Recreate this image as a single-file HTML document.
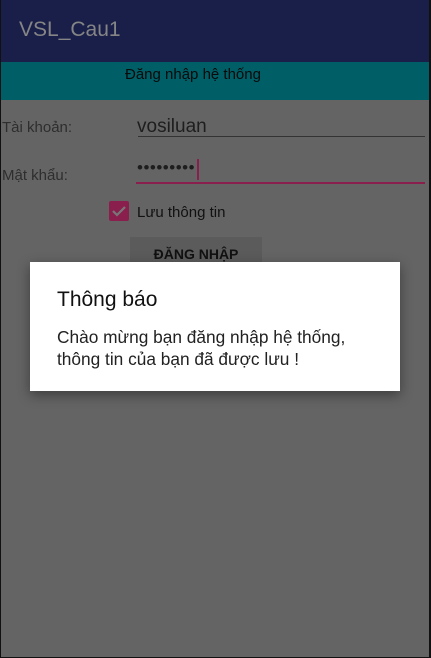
<!DOCTYPE html>
<html><head><meta charset="utf-8"><style>
*{margin:0;padding:0;box-sizing:border-box}
body{width:431px;height:658px;overflow:hidden;background:#111;font-family:"Liberation Sans",sans-serif;position:relative}
.scr{position:absolute;left:1px;top:0;width:428px;height:657px;background:#646464}
.bar{position:absolute;left:0;top:0;width:428px;height:62px;background:#1a1f4a}
.bar span{position:absolute;left:18px;top:18px;font-size:21px;color:#858585}
.teal{position:absolute;left:0;top:62px;width:428px;height:38px;background:#005e66;font-size:15px;color:#0a0a0a;line-height:26px}
.teal span{position:absolute;left:124px;top:0}
.t{position:absolute;font-size:15px;color:#2e2e2e}
.dlg{position:absolute;left:30px;top:262px;width:370px;height:129px;background:#fff;box-shadow:0 4px 12px rgba(0,0,0,.4)}
</style></head><body>
<div class="scr">
<div class="bar"><span>VSL_Cau1</span></div>
<div class="teal"><span>Đăng nhập hệ thống</span></div>
<div class="t" style="left:1px;top:119px">Tài khoản:</div>
<div class="t" style="left:136px;top:116px;font-size:19px;color:#1e1e1e">vosiluan</div>
<div style="position:absolute;left:137px;top:136px;width:287px;height:1px;background:#333"></div>
<div class="t" style="left:1px;top:167px">Mật khẩu:</div>
<div class="t" style="left:136px;top:158px;font-size:17px;color:#1e1e1e;letter-spacing:0.5px">•••••••••</div>
<div style="position:absolute;left:196px;top:159px;width:2px;height:21px;background:#8a1f4e"></div>
<div style="position:absolute;left:135px;top:182px;width:289px;height:2px;background:#8a1f4e"></div>
<div style="position:absolute;left:108px;top:201px;width:20px;height:20px;background:#8a1f4e;border-radius:2px"><svg width="20" height="20"><path d="M4 10l4 4 8-8" stroke="#777" stroke-width="2.2" fill="none"/></svg></div>
<div class="t" style="left:136px;top:204px;color:#111">Lưu thông tin</div>
<div style="position:absolute;left:129px;top:237px;width:132px;height:30px;background:#5b5b5b;text-align:center;font-size:14px;font-weight:bold;color:#111;line-height:34px">ĐĂNG NHẬP</div>
</div>
<div class="dlg">
<div style="position:absolute;left:27px;top:26px;font-size:21px;color:#111">Thông báo</div>
<div style="position:absolute;left:27px;top:64px;font-size:17.3px;color:#222;line-height:22px">Chào mừng bạn đăng nhập hệ thống,<br>thông tin của bạn đã được lưu !</div>
</div>
</body></html>
